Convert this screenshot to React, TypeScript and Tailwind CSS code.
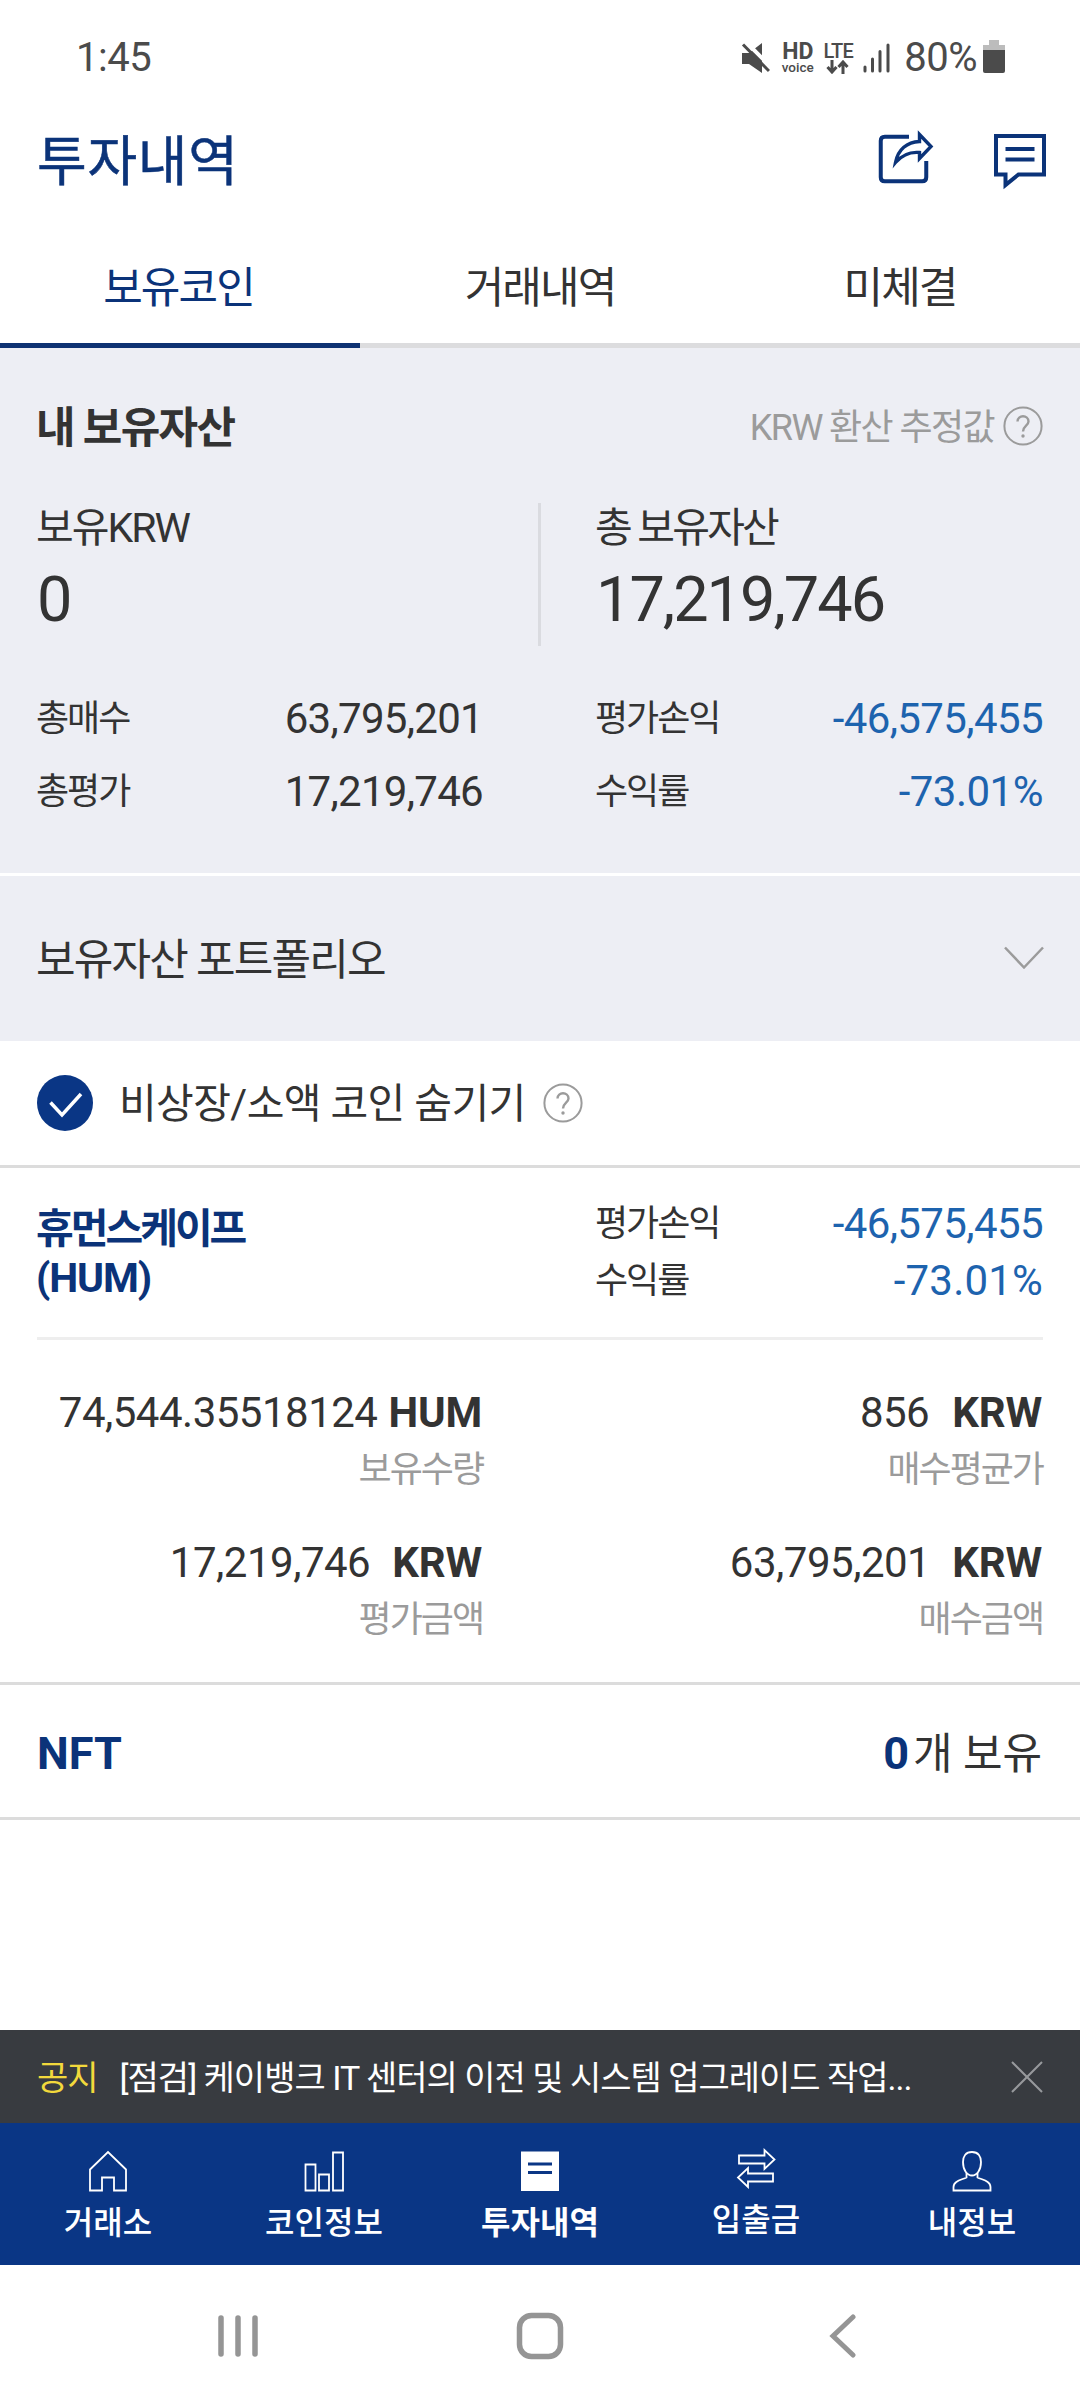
import type { ReactNode } from "react";

const tabs = ["보유코인", "거래내역", "미체결"];

const holdings = [
  { amount: "74,544.35518124", unit: "HUM", label: "보유수량", gap: "gap-[11px]" },
  { amount: "856", unit: "KRW", label: "매수평균가", gap: "gap-[23px]" },
  { amount: "17,219,746", unit: "KRW", label: "평가금액", gap: "gap-[22px]" },
  { amount: "63,795,201", unit: "KRW", label: "매수금액", gap: "gap-[22px]" },
];

const HomeIcon = () => (
  <svg width="40" height="42" viewBox="0 0 40 42" fill="none" stroke="currentColor" strokeWidth="1.8">
    <path d="M2 40.5V19.5L20 2L38 19.5V40.5H26V27.5H14V40.5Z" />
  </svg>
);

const ChartIcon = () => (
  <svg width="40" height="42" viewBox="0 0 40 42" fill="none" stroke="currentColor" strokeWidth="1.8">
    <path d="M1.5 14.5H11.5V40.5H1.5ZM15 24.5H25V40.5H15ZM29 2.5H39V40.5H29Z" />
  </svg>
);

const InvestIcon = () => (
  <svg width="40" height="42" viewBox="0 0 40 42">
    <path d="M1 1.5H39V41H1Z" fill="#fff" />
    <path d="M8 14H32M8 22.5H32" stroke="#0a3685" strokeWidth="3" />
  </svg>
);

const TransferIcon = () => (
  <svg width="40" height="42" viewBox="0 0 40 42" fill="none" stroke="currentColor" strokeWidth="1.8">
    <path d="M3 8.5H28.5V3L38.5 12.5L28.5 22V16.5H3Z" />
    <path d="M37 34.5H12V40L2 30.5L12 21V26.5H37Z" />
  </svg>
);

const UserIcon = () => (
  <svg width="40" height="42" viewBox="0 0 40 42" fill="none" stroke="currentColor" strokeWidth="1.8">
    <path d="M20 2C13.5 2 11 6.5 11 12C11 20 15 25.5 20 25.5C25 25.5 29 20 29 12C29 6.5 26.5 2 20 2Z" />
    <path d="M14.5 23V27.5C9 30 1.5 31 1.5 37V40.5H38.5V37C38.5 31 31 30 25.5 27.5V23" />
  </svg>
);

const menus = [
  { name: "거래소", icon: <HomeIcon /> },
  { name: "코인정보", icon: <ChartIcon /> },
  { name: "투자내역", icon: <InvestIcon />, active: true },
  { name: "입출금", icon: <TransferIcon />, raised: true },
  { name: "내정보", icon: <UserIcon /> },
];

const Help = () => (
  <svg width="40" height="40" viewBox="0 0 40 40" fill="none" stroke="#9b9b9b" strokeWidth="2">
    <circle cx="20" cy="20" r="18.6" />
    <path d="M14.5 15.5C14.5 8.5 25.5 8.5 25.5 15.5C25.5 19.5 20 20 20 25.5" strokeWidth="2.4" />
    <circle cx="20" cy="30" r="1.7" fill="#9b9b9b" stroke="none" />
  </svg>
);

const StatusBar = () => (
  <div className="flex h-[114px] items-center justify-between pt-[2px] pr-[75px] pl-[76px] text-[#4b4b4b]">
    <span className="text-[40px] leading-none tracking-[-0.5px]">1:45</span>
    <div className="flex items-center">
      <svg width="29" height="32" viewBox="0 0 29 32" className="mr-[11px]">
        <path d="M1 11H8L21 1V31L8 22H1Z" fill="#4b4b4b" />
        <path d="M4 -1L33 28" stroke="#fff" strokeWidth="4" />
        <path d="M2 2.5L28 29" stroke="#4b4b4b" strokeWidth="3" />
      </svg>
      <div className="mr-[9px] flex w-[33px] flex-col items-center">
        <span className="text-[23px] leading-[17px] font-bold">HD</span>
        <span className="pt-px text-[13.5px] leading-[12px] font-medium">voice</span>
      </div>
      <div className="mr-[10px] flex w-[30px] flex-col items-center">
        <span className="text-[20px] leading-[17px] font-medium tracking-[-0.8px]">LTE</span>
        <svg width="24" height="14" viewBox="0 0 24 14" fill="none" stroke="#4b4b4b" strokeWidth="3">
          <path d="M6 0V12M1.5 7L6 12L10.5 7M17 14V2M12.5 7L17 2L21.5 7" />
        </svg>
      </div>
      <svg width="27" height="30" viewBox="0 0 27 30" stroke="#4b4b4b" strokeWidth="3" strokeLinecap="round" className="mr-[14px]">
        <path d="M2 24V28M9.5 16V28M17 8.5V28M25 2V28" />
      </svg>
      <span className="mr-[6px] text-[40px] leading-none tracking-[-0.5px]">80%</span>
      <svg width="22" height="33" viewBox="0 0 22 33" className="-mt-[4px]">
        <path d="M6 0H16V5H22V12H0V5H6Z" fill="#bcbcbc" />
        <path d="M0 10H22V31Q22 33 20 33H2Q0 33 0 31Z" fill="#4b4b4b" />
      </svg>
    </div>
  </div>
);

const Header = () => (
  <header className="flex h-[92px] items-center justify-between pr-[34px] pl-[37px] text-[#0b3379]">
    <h1 className="pt-[5px] text-[54px] leading-none tracking-[0.7px] [-webkit-text-stroke:0.5px_#0b3379]">투자내역</h1>
    <div className="flex items-center gap-[58px]">
      <svg width="58" height="60" viewBox="0 0 58 60" fill="none" stroke="currentColor" strokeWidth="4">
        <path d="M33 6.75H8.75Q4.75 6.75 4.75 10.75V47.25Q4.75 51.25 8.75 51.25H46.25Q50.25 51.25 50.25 47.25V31" />
        <path d="M43.5 4.5L55 16.5L43.5 28.5V22.5C33 21.5 26 25 19.5 32.5C22 19.5 31 12 43.5 11.5Z" strokeWidth="3.4" />
      </svg>
      <svg width="54" height="60" viewBox="0 0 54 60" fill="none" stroke="currentColor" strokeWidth="4">
        <path d="M4 6H52V44.5H26.5L13.5 55V44.5H4Z" />
        <path d="M13.5 19H42.5M13.5 29.5H42.5" />
      </svg>
    </div>
  </header>
);

const Row = ({ label, children, height }: { label: string; children: ReactNode; height: string }) => (
  <div className={`flex items-center justify-between ${height}`}>
    <span className="text-[36px] tracking-[-2px]">{label}</span>
    {children}
  </div>
);

const Assets = () => (
  <section className="h-[525px] bg-[#edeef4] pt-[49px] pr-[37px] pl-[36px]">
    <div className="flex h-[60px] items-center justify-between">
      <h2 className="pt-[2px] text-[43px] font-bold tracking-[-1.7px]">내 보유자산</h2>
      <div className="flex items-center gap-[9px] text-[36px] tracking-[-1.6px] text-[#9b9b9b]">
        <span className="pt-px">KRW 환산 추정값</span>
        <span className="-mt-[2px]">
          <Help />
        </span>
      </div>
    </div>
    <div className="mt-[46px] flex h-[143px]">
      <div className="w-[502px]">
        <p className="flex h-[50px] items-center text-[41px] tracking-[-2px]">보유KRW</p>
        <p className="flex h-[92px] items-center pl-[1px] text-[63px] tracking-[-2px]">0</p>
      </div>
      <div className="w-[3px] bg-[#dadbe0]" />
      <div className="pl-[54px]">
        <p className="flex h-[50px] items-center text-[41px] tracking-[-2.8px]">총 보유자산</p>
        <p className="flex h-[92px] items-center pl-[1px] text-[63px] tracking-[-2px]">17,219,746</p>
      </div>
    </div>
    <div className="mt-[36px] grid grid-cols-[447px_448px] justify-between">
      <Row label="총매수" height="h-[73px]">
        <span className="text-[42px] tracking-[-0.7px]">63,795,201</span>
      </Row>
      <Row label="평가손익" height="h-[73px]">
        <span className="text-[42px] tracking-[-0.6px] text-[#1d63ae]">-46,575,455</span>
      </Row>
      <Row label="총평가" height="h-[73px]">
        <span className="text-[42px] tracking-[-0.7px]">17,219,746</span>
      </Row>
      <Row label="수익률" height="h-[73px]">
        <span className="text-[42px] tracking-[-0.5px] text-[#1d63ae]">-73.01%</span>
      </Row>
    </div>
  </section>
);

const Coin = () => (
  <section className="h-[517px] border-b-[3px] border-[#dcdcdc] px-[37px]">
    <div className="flex h-[172px] justify-between border-b-[3px] border-[#eeeeee]">
      <h3 className="-ml-px pt-[37px] text-[41px] leading-[49px] font-bold tracking-[-3px] text-[#0b3379]">
        휴먼스케이프
        <br />
        <span className="tracking-[-1.1px]">(HUM)</span>
      </h3>
      <div className="w-[448px] pt-[27px]">
        <Row label="평가손익" height="h-[57px]">
          <span className="text-[42px] tracking-[-0.6px] text-[#1d63ae]">-46,575,455</span>
        </Row>
        <Row label="수익률" height="h-[57px]">
          <span className="text-[42px] tracking-[0.2px] text-[#1d63ae]">-73.01%</span>
        </Row>
      </div>
    </div>
    <div className="grid grid-cols-[446px_447px] justify-between gap-y-[36px] pt-[44px]">
      {holdings.map((item) => (
        <div key={item.label} className="text-right">
          <div className={`flex h-[58px] items-center justify-end pr-px text-[42px] ${item.gap}`}>
            <span className="tracking-[-0.5px]">{item.amount}</span>
            <b className="tracking-[-0.2px]">{item.unit}</b>
          </div>
          <div className="flex h-[56px] items-center justify-end text-[36px] tracking-[-2px] text-[#9b9b9b]">{item.label}</div>
        </div>
      ))}
    </div>
  </section>
);

const App = () => {
  return (
    <div className="flex h-[2400px] w-[1080px] flex-col overflow-hidden bg-white font-['Roboto','Noto_Sans_CJK_KR',sans-serif] leading-none text-[#333333]">
      <StatusBar />
      <Header />
      <nav className="grid h-[142px] grid-cols-3">
        {tabs.map((tab, i) => (
          <div
            key={tab}
            className={`flex items-center justify-center border-b-[5px] pt-[28px] text-[43px] tracking-[-1.9px] ${
              i === 0 ? "border-[#0e3272] pr-[3px] text-[#0b3379]" : "border-[#dcdcde]"
            }`}
          >
            {tab}
          </div>
        ))}
      </nav>
      <Assets />
      <section className="mt-[3px] flex h-[165px] items-center justify-between bg-[#edeef4] px-[36px]">
        <span className="pt-[4px] text-[43px] tracking-[-1.8px]">보유자산 포트폴리오</span>
        <svg width="40" height="24" viewBox="0 0 40 24" fill="none" stroke="#9b9b9b" strokeWidth="2.5" className="-mt-[2px]">
          <path d="M1 1.5L20 21.5L39 1.5" />
        </svg>
      </section>
      <section className="flex h-[127px] items-center border-b-[3px] border-[#dcdcdc] px-[37px]">
        <svg width="56" height="56" viewBox="0 0 56 56" className="mr-[26px]">
          <circle cx="28" cy="28" r="28" fill="#0a3685" />
          <path d="M13.5 27.5L25 40L44 19" fill="none" stroke="#fff" strokeWidth="3.5" />
        </svg>
        <span className="pt-[3px] text-[41px] tracking-[-0.6px]">비상장/소액 코인 숨기기</span>
        <span className="ml-[17px]">
          <Help />
        </span>
      </section>
      <Coin />
      <section className="flex h-[135px] items-center justify-between border-b-[3px] border-[#dcdcdc] pt-[4px] pr-[38px] pl-[37px] text-[43px]">
        <b className="text-[45px] text-[#0b3379]">NFT</b>
        <span className="tracking-[-0.1px]">
          <b className="mr-[4px] text-[45px] text-[#0b3379]">0</b>개 보유
        </span>
      </section>
      <div className="mt-auto flex h-[93px] items-center bg-[#383b40] pr-[37px] pl-[37px] text-[34px] tracking-[-1px] text-white">
        <span className="mr-[22px] pt-[3px] text-[#f2d93c]">공지</span>
        <span className="flex-1 pt-[3px]">[점검] 케이뱅크 IT 센터의 이전 및 시스템 업그레이드 작업...</span>
        <svg width="32" height="32" viewBox="0 0 32 32" stroke="#97999c" strokeWidth="2">
          <path d="M1 1L31 31M31 1L1 31" />
        </svg>
      </div>
      <nav className="grid h-[142px] grid-cols-5 bg-[#0a3685] text-white">
        {menus.map((menu) => (
          <div key={menu.name} className={`flex flex-col items-center ${menu.raised ? "pt-[24px]" : "pt-[27px]"}`}>
            {menu.icon}
            <span className={`mt-[11px] text-[32px] leading-[40px] ${menu.active ? "font-bold" : "font-medium"}`}>{menu.name}</span>
          </div>
        ))}
      </nav>
      <div className="flex h-[135px] items-center justify-between pt-[6px] pr-[223px] pl-[217px]">
        <svg width="42" height="44" viewBox="0 0 42 44" stroke="#959595" strokeWidth="5.5" strokeLinecap="round">
          <path d="M4 4V40M21 4V40M38 4V40" />
        </svg>
        <svg width="48" height="48" viewBox="0 0 48 48" fill="none" stroke="#959595" strokeWidth="5.5" className="mr-[8px]">
          <rect x="3.5" y="3.5" width="41" height="41" rx="12" />
        </svg>
        <svg width="28" height="44" viewBox="0 0 28 44" fill="none" stroke="#959595" strokeWidth="5" strokeLinecap="round">
          <path d="M24 3L4 22L24 41" />
        </svg>
      </div>
    </div>
  );
};

export default App;
